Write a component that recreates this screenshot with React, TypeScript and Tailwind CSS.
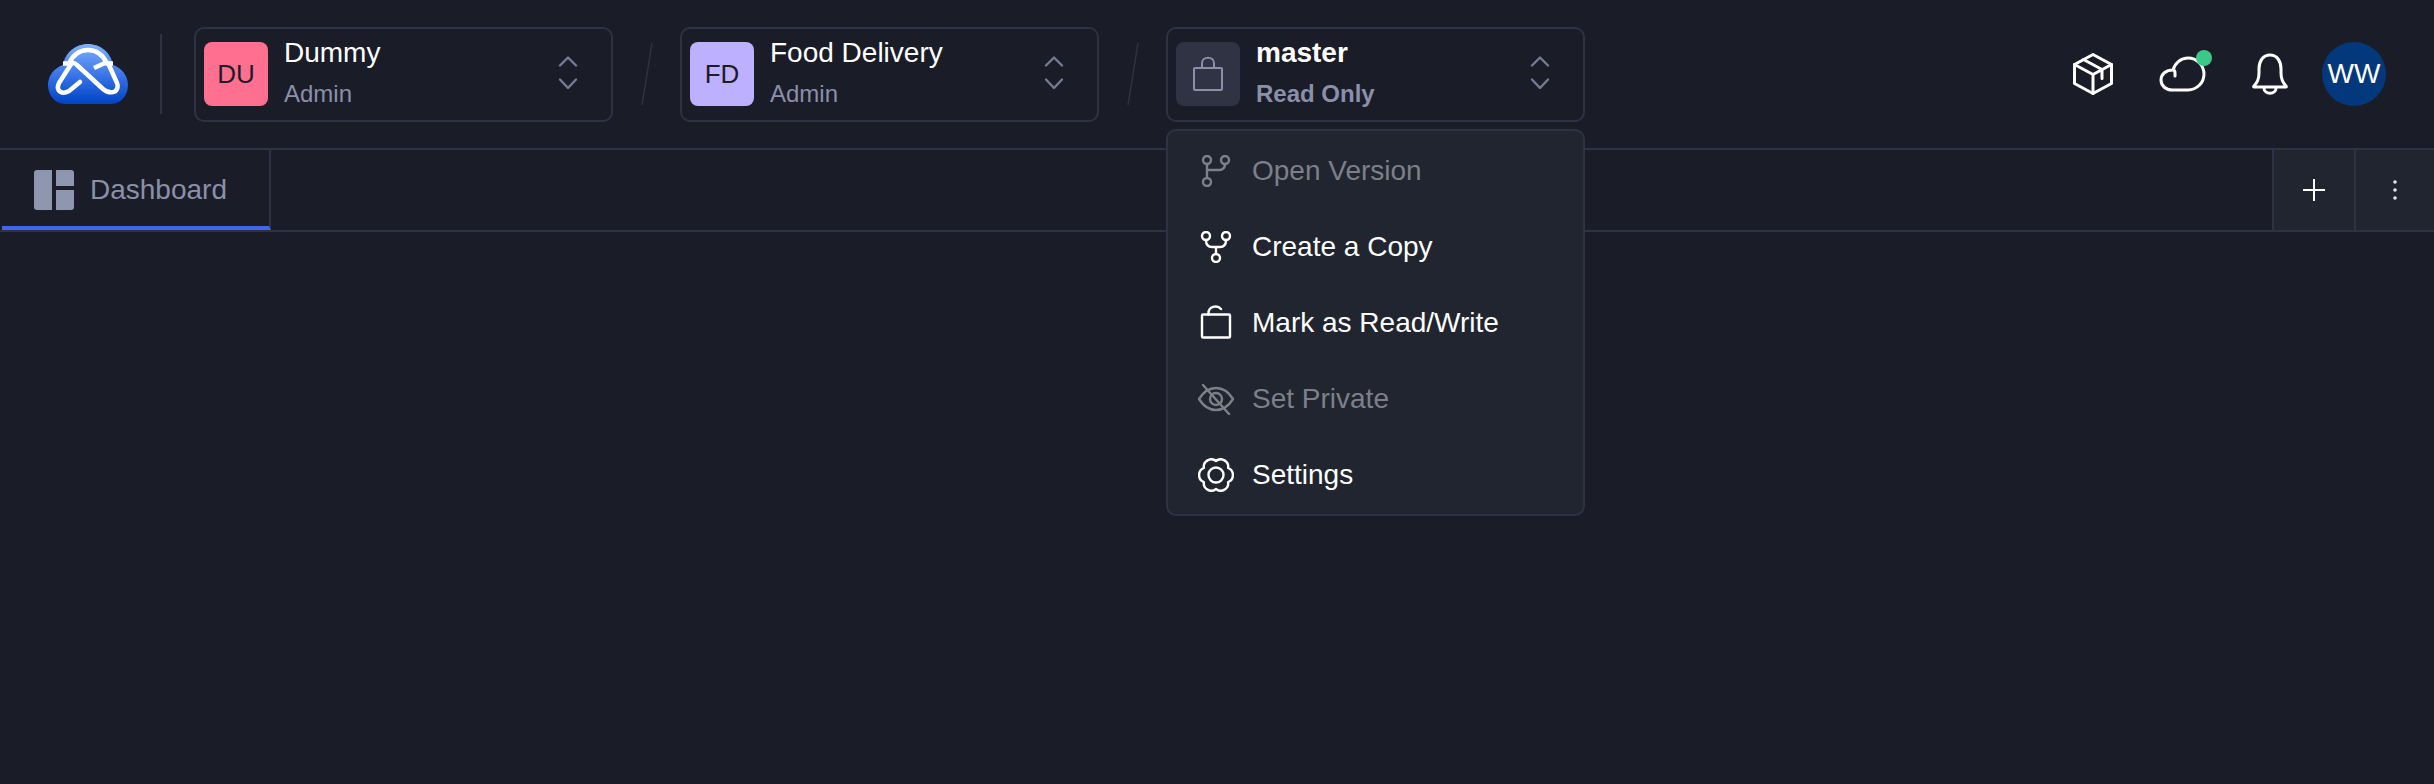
import React from "react";

const Chevrons = () => (
  <svg width="20" height="36" viewBox="0 0 20 36" fill="none" stroke="#767b93" strokeWidth="2.4" strokeLinecap="round" strokeLinejoin="round">
    <path d="M2 9.5 10 1.5l8 8" />
    <path d="M2 23.5 10 32l8-8.5" />
  </svg>
);

const Logo = () => (
  <svg width="80" height="60" viewBox="0 0 80 60" fill="none">
    <defs>
      <linearGradient id="cloudFill" x1="0" y1="0" x2="0" y2="1">
        <stop offset="0" stopColor="#7fb0ff" />
        <stop offset="0.6" stopColor="#2f6ce2" />
        <stop offset="1" stopColor="#0043c6" />
      </linearGradient>
    </defs>
    <path
      d="M17 60C7 60 0 51 0 41c0-9 6-17 15-20C17 9 27 0 40 0s23 9 25 21c9 3 15 11 15 20 0 10-7 19-17 19Z"
      fill="url(#cloudFill)"
    />
    <path d="M15 19.5h6C25 11 32 6 40 6s15 5 19 13.5h6" stroke="#fff" strokeWidth="4.5" />
    <path
      d="M32 38 21 47Q14 51 10.5 46 9 43 11 39L22.5 21Q25 17 29 21L55 45Q61 50 67 47.5 71 44 69 39L60 19"
      stroke="#fff"
      strokeWidth="4.5"
      strokeLinecap="round"
      strokeLinejoin="round"
    />
    <path d="M46 24 58 18.5" stroke="#fff" strokeWidth="4.5" />
  </svg>
);

const Slash = () => (
  <svg width="16" height="64" viewBox="0 0 16 64" fill="none" stroke="#2f3242" strokeWidth="1.5">
    <path d="M13 1 3 63" />
  </svg>
);

const Selector = ({ children, title, sub, bold }: { children: React.ReactNode; title: string; sub: string; bold?: boolean }) => (
  <div className="flex items-center w-[419px] h-[95px] border-2 border-[#2f3242] rounded-[10px] pl-2 pr-[33px]">
    {children}
    <div className="flex flex-col ml-4 flex-1 pb-1">
      <span className={`text-[28px] leading-8 text-white ${bold ? "font-bold" : ""}`}>{title}</span>
      <span className={`text-2xl leading-7 mt-[11px] text-[#8a90a8] ${bold ? "font-bold" : ""}`}>{sub}</span>
    </div>
    <Chevrons />
  </div>
);

const iconProps = {
  fill: "none",
  stroke: "currentColor",
  strokeWidth: 2.4,
  strokeLinecap: "round" as const,
  strokeLinejoin: "round" as const,
};

const menuItems: { label: string; muted?: boolean; icon: React.ReactNode }[] = [
  {
    label: "Open Version",
    muted: true,
    icon: (
      <svg width="32" height="32" viewBox="0 0 32 32" {...iconProps}>
        <circle cx="7" cy="5" r="4" />
        <circle cx="7" cy="27" r="4" />
        <circle cx="25" cy="5" r="4" />
        <path d="M7 9v14M25 9c0 4-2 6-6 6H7" />
      </svg>
    ),
  },
  {
    label: "Create a Copy",
    icon: (
      <svg width="32" height="32" viewBox="0 0 32 32" {...iconProps}>
        <circle cx="6" cy="5" r="4" />
        <circle cx="26" cy="5" r="4" />
        <circle cx="16" cy="27" r="4" />
        <path d="M6 9c0 4 2 7 6 7h8c4 0 6-3 6-7M16 16v7" />
      </svg>
    ),
  },
  {
    label: "Mark as Read/Write",
    icon: (
      <svg width="32" height="36" viewBox="0 0 32 36" {...iconProps}>
        <rect x="2" y="9.5" width="28" height="23" rx="1" />
        <path d="M8.5 9.5V8a7 6.5 0 0 1 12.5-4" />
      </svg>
    ),
  },
  {
    label: "Set Private",
    muted: true,
    icon: (
      <svg width="38" height="32" viewBox="0 0 38 32" {...iconProps}>
        <path d="M2 16C7 8 13 5 19 5s12 3 17 11c-5 8-11 11-17 11S7 24 2 16Z" />
        <circle cx="19" cy="16" r="6" />
        <path d="M6 2 32 31" />
      </svg>
    ),
  },
  {
    label: "Settings",
    icon: (
      <svg width="36" height="34" viewBox="0 0 36 34" {...iconProps}>
        <path d="M18 3A7.5 7.5 0 0 1 30.12 10 7.5 7.5 0 0 1 30.12 24 7.5 7.5 0 0 1 18 31 7.5 7.5 0 0 1 5.88 24 7.5 7.5 0 0 1 5.88 10 7.5 7.5 0 0 1 18 3Z" />
        <circle cx="18" cy="17" r="7.5" />
      </svg>
    ),
  },
];

export default function App() {
  return (
    <div className="relative min-h-[784px] bg-[#1a1c28] font-['Liberation_Sans',Arial,sans-serif] overflow-hidden">
      <header className="flex items-center h-[148px] pl-12 pr-12">
        <Logo />
        <div className="w-0.5 h-20 bg-[#2f3242] ml-8 mr-8" />
        <Selector title="Dummy" sub="Admin">
          <div className="w-16 h-16 rounded-lg bg-[#ff6f8f] flex items-center justify-center text-[26px] text-[#1a1c28]">DU</div>
        </Selector>
        <div className="ml-[26px] mr-[25px]"><Slash /></div>
        <Selector title="Food Delivery" sub="Admin">
          <div className="w-16 h-16 rounded-lg bg-[#bcb0ff] flex items-center justify-center text-[26px] text-[#1a1c28]">FD</div>
        </Selector>
        <div className="ml-[26px] mr-[25px]"><Slash /></div>
        <div className="relative">
          <Selector title="master" sub="Read Only" bold>
            <div className="w-16 h-16 rounded-lg bg-[#2f3344] flex items-center justify-center text-[#8a90a8]">
              <svg width="32" height="36" viewBox="0 0 32 36" fill="none" stroke="currentColor" strokeWidth="2">
                <rect x="2" y="12" width="28" height="22" rx="1" />
                <path d="M10 12V7c0-7 12-7 12 0v5" />
              </svg>
            </div>
          </Selector>
          <div className="absolute left-0 top-[102px] z-10 w-[419px] h-[387px] border-2 border-[#2f3242] rounded-[10px] bg-[#212530] py-0.5">
            {menuItems.map((item) => (
              <div key={item.label} className={`flex items-center h-[76px] ${item.muted ? "text-[#7d8089]" : "text-white"}`}>
                <span className="w-[84px] flex justify-center pl-3">{item.icon}</span>
                <span className="text-[28px] leading-8">{item.label}</span>
              </div>
            ))}
          </div>
        </div>
        <div className="ml-auto flex items-center text-white">
          <svg width="42" height="42" viewBox="0 0 42 42" {...iconProps} strokeWidth={3}>
            <path d="M21 1.5 39.5 11.5v19L21 40.5 2.5 30.5v-19Z" />
            <path d="M2.5 11.5 21 21.5 39.5 11.5M21 21.5v19M11.5 6.5 30 16.5v9" />
          </svg>
          <div className="relative ml-[45px]">
            <svg width="48" height="36" viewBox="0 0 48 36" {...iconProps} strokeWidth={3} className="block">
              <path d="M13 34H29A16 16 0 0 0 29 2C22 2 16 7 14 14 7 14 2 18 2 24c0 6 5 10 11 10ZM14 14c1 0 2 1 2 3v3" />
            </svg>
            <span className="absolute -top-[6px] -right-[5px] w-4 h-4 rounded-full bg-[#3cc987]" />
          </div>
          <svg width="38" height="42" viewBox="0 0 38 42" {...iconProps} strokeWidth={3} className="ml-[44px]">
            <path d="M3 33c3-3 5-7 5-13v-4C8 8 12 2 19 2s11 6 11 14v4c0 6 2 10 5 13 1 1 0 1-1 1H4c-1 0-2 0-1-1Z" />
            <path d="M13 35c0 7 12 7 12 0" />
          </svg>
          <div className="ml-[33px] w-16 h-16 rounded-full bg-[#03397c] flex items-center justify-center text-[28px] text-white">WW</div>
        </div>
      </header>
      <div className="flex h-[84px] border-y-2 border-[#2f3242]">
        <div className="flex items-center w-[269px] ml-0.5 border-r-2 border-[#2f3242] border-b-4 border-b-[#4065ee] pl-8 pt-1 h-[80px] text-[#8a90a8]">
          <svg width="40" height="40" viewBox="0 0 40 40" className="text-[#8f97b0]" fill="currentColor">
            <path d="M3 0h15v40H3a3 3 0 0 1-3-3V3a3 3 0 0 1 3-3Z" />
            <path d="M22 0h15a3 3 0 0 1 3 3v13H22Z" />
            <path d="M22 20h18v17a3 3 0 0 1-3 3H22Z" />
          </svg>
          <span className="ml-4 text-[28px] leading-8">Dashboard</span>
        </div>
        <div className="ml-auto flex">
          <div className="w-[82px] border-l-2 border-[#2f3242] bg-[#212530] flex items-center justify-center text-white">
            <svg width="22" height="22" viewBox="0 0 22 22" stroke="currentColor" strokeWidth="2">
              <path d="M11 0v22M0 11h22" />
            </svg>
          </div>
          <div className="w-20 border-l-2 border-[#2f3242] bg-[#212530] flex items-center justify-center">
            <svg width="4" height="20" viewBox="0 0 4 20" fill="#e4e6ee">
              <circle cx="2" cy="2" r="1.8" />
              <circle cx="2" cy="10" r="1.8" />
              <circle cx="2" cy="18" r="1.8" />
            </svg>
          </div>
        </div>
      </div>
    </div>
  );
}
